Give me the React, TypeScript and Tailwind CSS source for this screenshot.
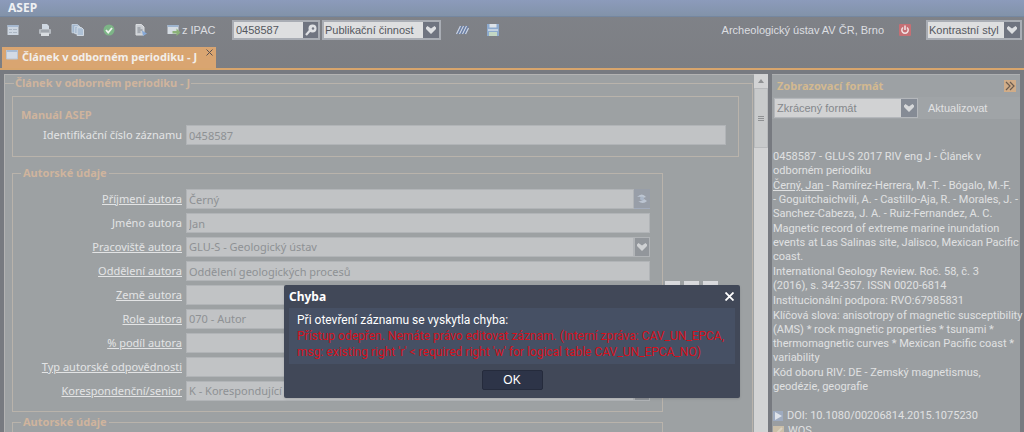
import React from "react";

const SANS = "font-['Liberation_Sans',sans-serif]";
const HEADING = "font-['Noto_Sans',sans-serif] text-[11px] font-bold leading-4";

interface AuthorField {
  id: string;
  label: string;
  value: string;
  link?: boolean;
  control?: "text" | "select" | "lookup";
}

const authorFields: AuthorField[] = [
  { id: "surname", label: "Příjmení autora", value: "Černý", link: true, control: "lookup" },
  { id: "name", label: "Jméno autora", value: "Jan" },
  { id: "workplace", label: "Pracoviště autora", value: "GLU-S - Geologický ústav", link: true, control: "select" },
  { id: "department", label: "Oddělení autora", value: "Oddělení geologických procesů", link: true },
  { id: "country", label: "Země autora", value: "", link: true },
  { id: "role", label: "Role autora", value: "070 - Autor", link: true, control: "select" },
  { id: "share", label: "% podíl autora", value: "", link: true },
  { id: "responsibility", label: "Typ autorské odpovědnosti", value: "", link: true, control: "select" },
  { id: "senior", label: "Korespondenční/senior", value: "K - Korespondující autor", link: true, control: "select" },
];

const Arrow: React.FC = () => (
  <svg viewBox="0 0 10 8" className="h-2 w-2.5" fill="currentColor">
    <path d="M0 1.500 1.500 0 5 2.500 8.500 0 10 1.500V3L5 8 0 3z" />
  </svg>
);

const WindowIcon: React.FC = () => (
  <svg viewBox="0 0 12 12" className="size-3">
    <rect x="0.5" y="1" width="11" height="10" fill="#ccd5e0" />
    <rect x="0.5" y="1" width="11" height="2" fill="#a5b8d0" />
    <path d="M2 5.500h3M6 5.500h4M2 8.500h3M6 8.500h4" stroke="#aab5c2" />
  </svg>
);

const TabIcon: React.FC = () => (
  <svg viewBox="0 0 12 12" className="size-3">
    <rect x="0.5" y="1" width="11" height="9" fill="#d3dae4" />
    <path d="M.5 2h11" stroke="#a9bcd4" strokeWidth="2" />
    <path d="M.5 1v9h11V1" fill="none" stroke="#b9c5d4" />
  </svg>
);

const PrintIcon: React.FC = () => (
  <svg viewBox="0 0 12 12" className="size-3">
    <path d="M3 0h5l2 2v4H3z" fill="#cfd8e2" />
    <rect x="0" y="5" width="12" height="5" rx="1" fill="#b4b9bf" />
    <path d="M2 9h8v3H2z" fill="#d9dde1" />
    <path d="M2 7h8" stroke="#8b9199" />
  </svg>
);

const CopyIcon: React.FC = () => (
  <svg viewBox="0 0 14 13" className="h-3 w-3.5">
    <path d="M.5.5h6l2 2v7h-8z" fill="#9fb4cc" stroke="#c3d0de" />
    <path d="M3.500 2.500h5l2 2v6h-7z" fill="#9fb4cc" stroke="#d3dce6" />
    <path d="M6 4h5l2 2v6.500H6z" fill="#adc0d5" stroke="#d8e0e8" />
  </svg>
);

const OkIcon: React.FC = () => (
  <svg viewBox="0 0 12 12" className="size-3">
    <circle cx="6" cy="6" r="5.500" fill="#7db587" />
    <path d="m3 6 2.200 2.500L9 4" fill="none" stroke="#eef4ee" strokeWidth="1.800" />
  </svg>
);

const EditPageIcon: React.FC = () => (
  <svg viewBox="0 0 12 12" className="size-3">
    <path d="M1 .5h5.500l2.500 2.500v8H1z" fill="#c9cdd2" stroke="#dadde0" />
    <path d="M2.500 4h3M2.500 6h5M2.500 8h3" stroke="#7e848d" />
    <path d="m7 6.500 5 3L8 12z" fill="#86a8d6" />
  </svg>
);

const ImportIcon: React.FC = () => (
  <svg viewBox="0 0 13 12" className="h-3 w-3.5">
    <rect x="0" y="1" width="11" height="9" fill="#d5dce3" />
    <rect x="0" y="1" width="11" height="2" fill="#9db4cf" />
    <path d="M5 7h4V4.500L13 8.500 9 12v-2.500H5z" fill="#8bb178" />
  </svg>
);

const KeyIcon: React.FC = () => (
  <svg viewBox="0 0 12 12" className="size-3">
    <circle cx="7.500" cy="4.500" r="4" fill="#dfe1e4" />
    <circle cx="8" cy="4.500" r="1.200" fill="#757a86" />
    <path d="M5 6.500 1 11" stroke="#dfe1e4" strokeWidth="2.200" />
  </svg>
);

const StripesIcon: React.FC = () => (
  <svg viewBox="0 0 13 12" className="h-3 w-3.5">
    <path d="M1 10 5 2M4 10l4-8M7 10l4-8M10 10l3-6" stroke="#c5d0e4" strokeWidth="1.300" />
    <path d="M2.500 10l4-8M5.500 10l4-8M8.500 10l4-8" stroke="#6480b2" />
  </svg>
);

const SaveIcon: React.FC = () => (
  <svg viewBox="0 0 12 12" className="size-3">
    <rect width="12" height="12" fill="#8daace" />
    <rect x="2.500" width="7" height="3.500" fill="#dde3e9" />
    <path d="M1 6h10" stroke="#d5dee8" strokeWidth="1.500" />
    <rect x="2" y="8" width="8" height="4" fill="#c3d7c4" />
  </svg>
);

const PowerIcon: React.FC = () => (
  <svg viewBox="0 0 12 12" className="size-3">
    <rect width="12" height="12" rx="1" fill="#c56f74" />
    <path d="M4 3.500a3.200 3.200 0 1 0 4 0M6 1.500V6" fill="none" stroke="#f1e4e5" strokeWidth="1.500" />
  </svg>
);

const ToolSelect: React.FC<{ label: string; value: string; className: string }> = ({ label, value, className }) => (
  <label className={`flex h-5 border-2 border-[#a9adb4] bg-[#6f7480] text-[#dddfe2] ${className}`}>
    <span className="sr-only">{label}</span>
    <select className="min-w-0 flex-1 appearance-none bg-[#dedfe0] px-px text-[#55585e] outline-none">
      <option>{value}</option>
    </select>
    <span className="flex w-4 items-center justify-center">
      <Arrow />
    </span>
  </label>
);

const FieldRow: React.FC<{ field: AuthorField }> = ({ field }) => {
  const box = "h-5 min-w-0 flex-1 appearance-none border border-[#b1b4b7] bg-[#c1c3c5] px-0.5 text-[#8e9194] outline-none";
  return (
    <div className="flex h-6 items-center gap-1">
      <label
        htmlFor={field.id}
        className={`w-[169px] shrink-0 text-right text-[#e3e4e5] ${field.link ? "underline" : ""}`}
      >
        {field.label}
      </label>
      {field.control === "select" ? (
        <select id={field.id} className={box}>
          <option>{field.value}</option>
        </select>
      ) : (
        <input id={field.id} defaultValue={field.value} className={box} />
      )}
      {field.control === "select" && (
        <span className="-ml-1 flex h-5 w-4 items-center justify-center border border-[#b1b4b7] bg-[#92969b] text-[#cfd1d3]">
          <Arrow />
        </span>
      )}
      {field.control === "lookup" && (
        <button aria-label="Vyhledat" className="-ml-1 flex h-5 w-4 items-center justify-center border-b border-[#a3acbc] bg-[#989ea8]">
          <svg viewBox="0 0 12 12" className="size-3">
            <path d="M1 4q5-5 9 0l-3 1q-3-2-6-1zM2 8q5 4 9 0L8 6Q5 9 2 8z" fill="#bcc5d2" />
            <circle cx="6" cy="5.500" r="2" fill="#aab6c8" />
          </svg>
        </button>
      )}
    </div>
  );
};

const Toolbar: React.FC = () => (
  <div className={`mb-1 flex h-[26px] items-center pr-0.5 pl-[7px] text-[11px] ${SANS}`}>
    <div className="flex items-center text-[#dcdee1]">
      <button aria-label="Nový" className="mr-5 flex w-3"><WindowIcon /></button>
      <button aria-label="Tisk" className="mr-5 flex w-3"><PrintIcon /></button>
      <button aria-label="Kopírovat" className="mr-[18px] flex w-3.5"><CopyIcon /></button>
      <button aria-label="Potvrdit" className="mr-5 flex w-3"><OkIcon /></button>
      <button aria-label="Upravit" className="mr-5 flex w-3"><EditPageIcon /></button>
      <button className="flex w-[65px] items-center gap-px whitespace-nowrap"><ImportIcon />z IPAC</button>
    </div>
    <div className="flex h-5 w-[88px] border-2 border-[#a9adb4] bg-[#6f7480]">
      <input aria-label="Číslo záznamu" defaultValue="0458587" className="w-[69px] bg-[#dedfe0] px-0.5 text-[#55585e] outline-none" />
      <button aria-label="Hledat" className="flex flex-1 items-center justify-center"><KeyIcon /></button>
    </div>
    <ToolSelect label="Databáze" value="Publikační činnost" className="ml-0.5 w-[119px]" />
    <button aria-label="Zobrazení" className="ml-3.5 flex w-3.5"><StripesIcon /></button>
    <button aria-label="Uložit" className="ml-[18px] flex w-3"><SaveIcon /></button>
    <span className="ml-auto text-[#dcdee1]">Archeologický ústav AV ČR, Brno</span>
    <button aria-label="Odhlásit" className="mx-[15px] flex w-3"><PowerIcon /></button>
    <ToolSelect label="Styl" value="Kontrastní styl" className="w-[96px]" />
  </div>
);

const RecordForm: React.FC = () => (
  <main className="min-w-0 flex-1 overflow-hidden border-t border-l border-[#b3b3b3] bg-[#9da1a3] pr-px font-['Noto_Sans',sans-serif] text-[11px]">
    <fieldset className="min-w-0 border-t border-r border-[#b9b3ab] px-[7px] pb-40">
      <legend className={`ml-0.5 h-4 px-px text-[#cfb49d] ${HEADING}`}>Článek v odborném periodiku - J</legend>
      <section className="mt-[5px] mr-[6px] h-[61px] border border-[#b9b3ab] pt-2.5 pr-3">
        <h2 className={`ml-2 h-4 text-[#cfb49d] ${HEADING}`}>Manuál ASEP</h2>
        <FieldRow field={{ id: "record", label: "Identifikační číslo záznamu", value: "0458587" }} />
      </section>
      <div className="mt-2 flex items-center gap-0.5">
        <fieldset className="h-[247px] w-[651px] border border-[#b9b3ab] pr-3">
          <legend className={`ml-2 h-4 px-0.5 text-[#cfb49d] ${HEADING}`}>Autorské údaje</legend>
          <div className="pt-1.5">
            {authorFields.map((field) => (
              <FieldRow key={field.id} field={field} />
            ))}
          </div>
        </fieldset>
        <div className="flex gap-1">
          <button aria-label="Přidat" className="h-4 w-[15px] bg-[#d9dadd]" />
          <button aria-label="Odebrat" className="h-4 w-[15px] bg-[#d9dadd]" />
          <button aria-label="Přesunout" className="h-4 w-[15px] bg-[#d9dadd]" />
        </div>
      </div>
      <fieldset className="mt-0.5 h-40 w-[651px] border border-[#b9b3ab]">
        <legend className={`ml-2 h-4 px-0.5 text-[#cfb49d] ${HEADING}`}>Autorské údaje</legend>
      </fieldset>
    </fieldset>
  </main>
);

const Scrollbar: React.FC = () => (
  <div className="flex w-3.5 shrink-0 flex-col bg-[#d2d3d4] text-[#8f9193]">
    <div className="flex h-3.5 items-center justify-center">
      <svg viewBox="0 0 6 4" className="h-1 w-1.5"><path d="m0 4 3-4 3 4z" fill="currentColor" /></svg>
    </div>
    <div className="flex h-[60px] flex-col items-center justify-center gap-px border border-[#b9bbbd] bg-[#c8cacb]">
      <i className="h-px w-1.5 bg-current" />
      <i className="h-px w-1.5 bg-current" />
      <i className="h-px w-1.5 bg-current" />
    </div>
  </div>
);

const FormatPanel: React.FC = () => (
  <aside className="w-[248px] shrink-0 bg-[#9a9ea1] text-[11px] text-[#e0e1e2]">
    <div className="flex h-[23px] items-center justify-between border-t border-[#aeb0b2] bg-[#9da1a4] pr-1 pl-[5px]">
      <h2 className={`text-[#d3b990] ${HEADING}`}>Zobrazovací formát</h2>
      <button aria-label="Sbalit" className="flex size-3 items-center justify-center bg-[#d0ac88] text-[#6b5c50]">
        <svg viewBox="0 0 10 10" className="size-2.5" fill="none" stroke="currentColor" strokeWidth="1.200">
          <path d="m1 1 4 4-4 4M5 1l4 4-4 4" />
        </svg>
      </button>
    </div>
    <div className={`flex h-[22px] items-center bg-[#a0a4a7] pl-0.5 ${SANS}`}>
      <label className="flex h-5 w-[144px] border border-[#b4b7bb] bg-[#858b95] text-[#d6d8da]">
        <span className="sr-only">Formát</span>
        <select className="min-w-0 flex-1 appearance-none bg-[#d1d2d3] px-0.5 text-[#84878b] outline-none">
          <option>Zkrácený formát</option>
        </select>
        <span className="flex w-4 items-center justify-center"><Arrow /></span>
      </label>
      <button className="ml-2.5">Aktualizovat</button>
    </div>
    <div className="mt-[31px] flex flex-col gap-px pl-px whitespace-nowrap leading-[14px]">
      <p>0458587 - GLU-S 2017 RIV eng J - Článek v<br />odborném periodiku</p>
      <p>
        <a href="#jan" className="underline">Černý, Jan</a> - Ramírez-Herrera, M.-T. - Bógalo, M.-F.<br />
        - Goguitchaichvili, A. - Castillo-Aja, R. - Morales, J. -<br />
        Sanchez-Cabeza, J. A. - Ruiz-Fernandez, A. C.
      </p>
      <p>Magnetic record of extreme marine inundation<br />events at Las Salinas site, Jalisco, Mexican Pacific<br />coast.</p>
      <p>International Geology Review. Roč. 58, č. 3<br />(2016), s. 342-357. ISSN 0020-6814</p>
      <p>Institucionální podpora: RVO:67985831</p>
      <p>
        Klíčová slova: anisotropy of magnetic susceptibility<br />
        (AMS) * rock magnetic properties * tsunami *<br />
        thermomagnetic curves * Mexican Pacific coast *<br />
        variability
      </p>
      <p>Kód oboru RIV: DE - Zemský magnetismus,<br />geodézie, geografie</p>
      <p className="mt-3.5 flex items-center gap-1">
        <svg viewBox="0 0 10 10" className="size-2.5">
          <rect width="10" height="10" fill="#9eabc0" />
          <path d="m2 1 7 4-7 4z" fill="#dfe3ea" />
        </svg>
        DOI: 10.1080/00206814.2015.1075230
      </p>
      <p className="flex items-center gap-1">
        <svg viewBox="0 0 11 11" className="size-[11px]">
          <rect width="11" height="11" fill="#cbbfa9" />
          <path d="M2 9 9 2" stroke="#dbd3c2" strokeWidth="2" />
        </svg>
        WOS
      </p>
    </div>
  </aside>
);

const ErrorDialog: React.FC = () => (
  <div
    role="dialog"
    aria-labelledby="error-title"
    className="absolute top-[285px] left-1/2 w-[456px] -translate-x-1/2 rounded-xs bg-[#414858] px-[5px] pb-2 text-white shadow-sm"
  >
    <div className="flex h-[23px] items-center justify-between">
      <h2 id="error-title" className="font-['Noto_Sans',sans-serif] font-bold">Chyba</h2>
      <button aria-label="Zavřít" className="flex size-3 items-center justify-center">
        <svg viewBox="0 0 9 9" className="size-[9px]" stroke="currentColor" strokeWidth="1.800">
          <path d="m.5.5 8 8m0-8-8 8" />
        </svg>
      </button>
    </div>
    <div className="h-14 bg-[#465064] px-2 pt-1 leading-4 whitespace-nowrap">
      <p>Při otevření záznamu se vyskytla chyba:</p>
      <p className="text-[#d6101c]">
        Přístup odepřen. Nemáte právo editovat záznam. (Interní zpráva: CAV_UN_EPCA,<br />
        msg: existing right 'r' &lt; required right 'w' for logical table CAV_UN_EPCA_NO)
      </p>
    </div>
    <button className={`mx-auto mt-1.5 block h-5 w-[61px] rounded-xs border border-[#252b3c] bg-[#2d3448] ${SANS}`}>
      OK
    </button>
  </div>
);

const App: React.FC = () => {
  return (
    <div className="relative flex h-screen flex-col overflow-hidden bg-[#777a80] font-['Roboto',sans-serif] text-[12px] leading-4">
      <header className="shrink-0 bg-linear-to-b from-[#808389] to-[#7c7e83]">
        <h1 className="h-[17px] border-b border-[#7587a0] bg-linear-to-b from-[#8c9bbb] to-[#8293a9] pl-2 font-['Noto_Sans',sans-serif] font-bold leading-[15px] text-[#eef0f3]">
          ASEP
        </h1>
        <Toolbar />
        <div className="flex h-[23px] border-b-2 border-[#d8a56c] pl-0.5">
          <div className={`flex w-[214px] items-start justify-between bg-[#d9a571] pt-0.5 pr-[3px] pl-1 text-[#f2eeea] ${HEADING}`}>
            <span className="flex gap-1 whitespace-nowrap"><TabIcon />Článek v odborném periodiku - J</span>
            <button aria-label="Zavřít záložku" className="text-[#5a5151]">
              <svg viewBox="0 0 7 7" className="size-[7px]" stroke="currentColor">
                <path d="m.5.5 6 6m0-6-6 6" />
              </svg>
            </button>
          </div>
        </div>
      </header>
      <div className="mt-1 flex min-h-0 flex-1 pr-1 pl-1">
        <RecordForm />
        <Scrollbar />
        <div className="w-1 shrink-0" />
        <FormatPanel />
      </div>
      <ErrorDialog />
    </div>
  );
};

export default App;
